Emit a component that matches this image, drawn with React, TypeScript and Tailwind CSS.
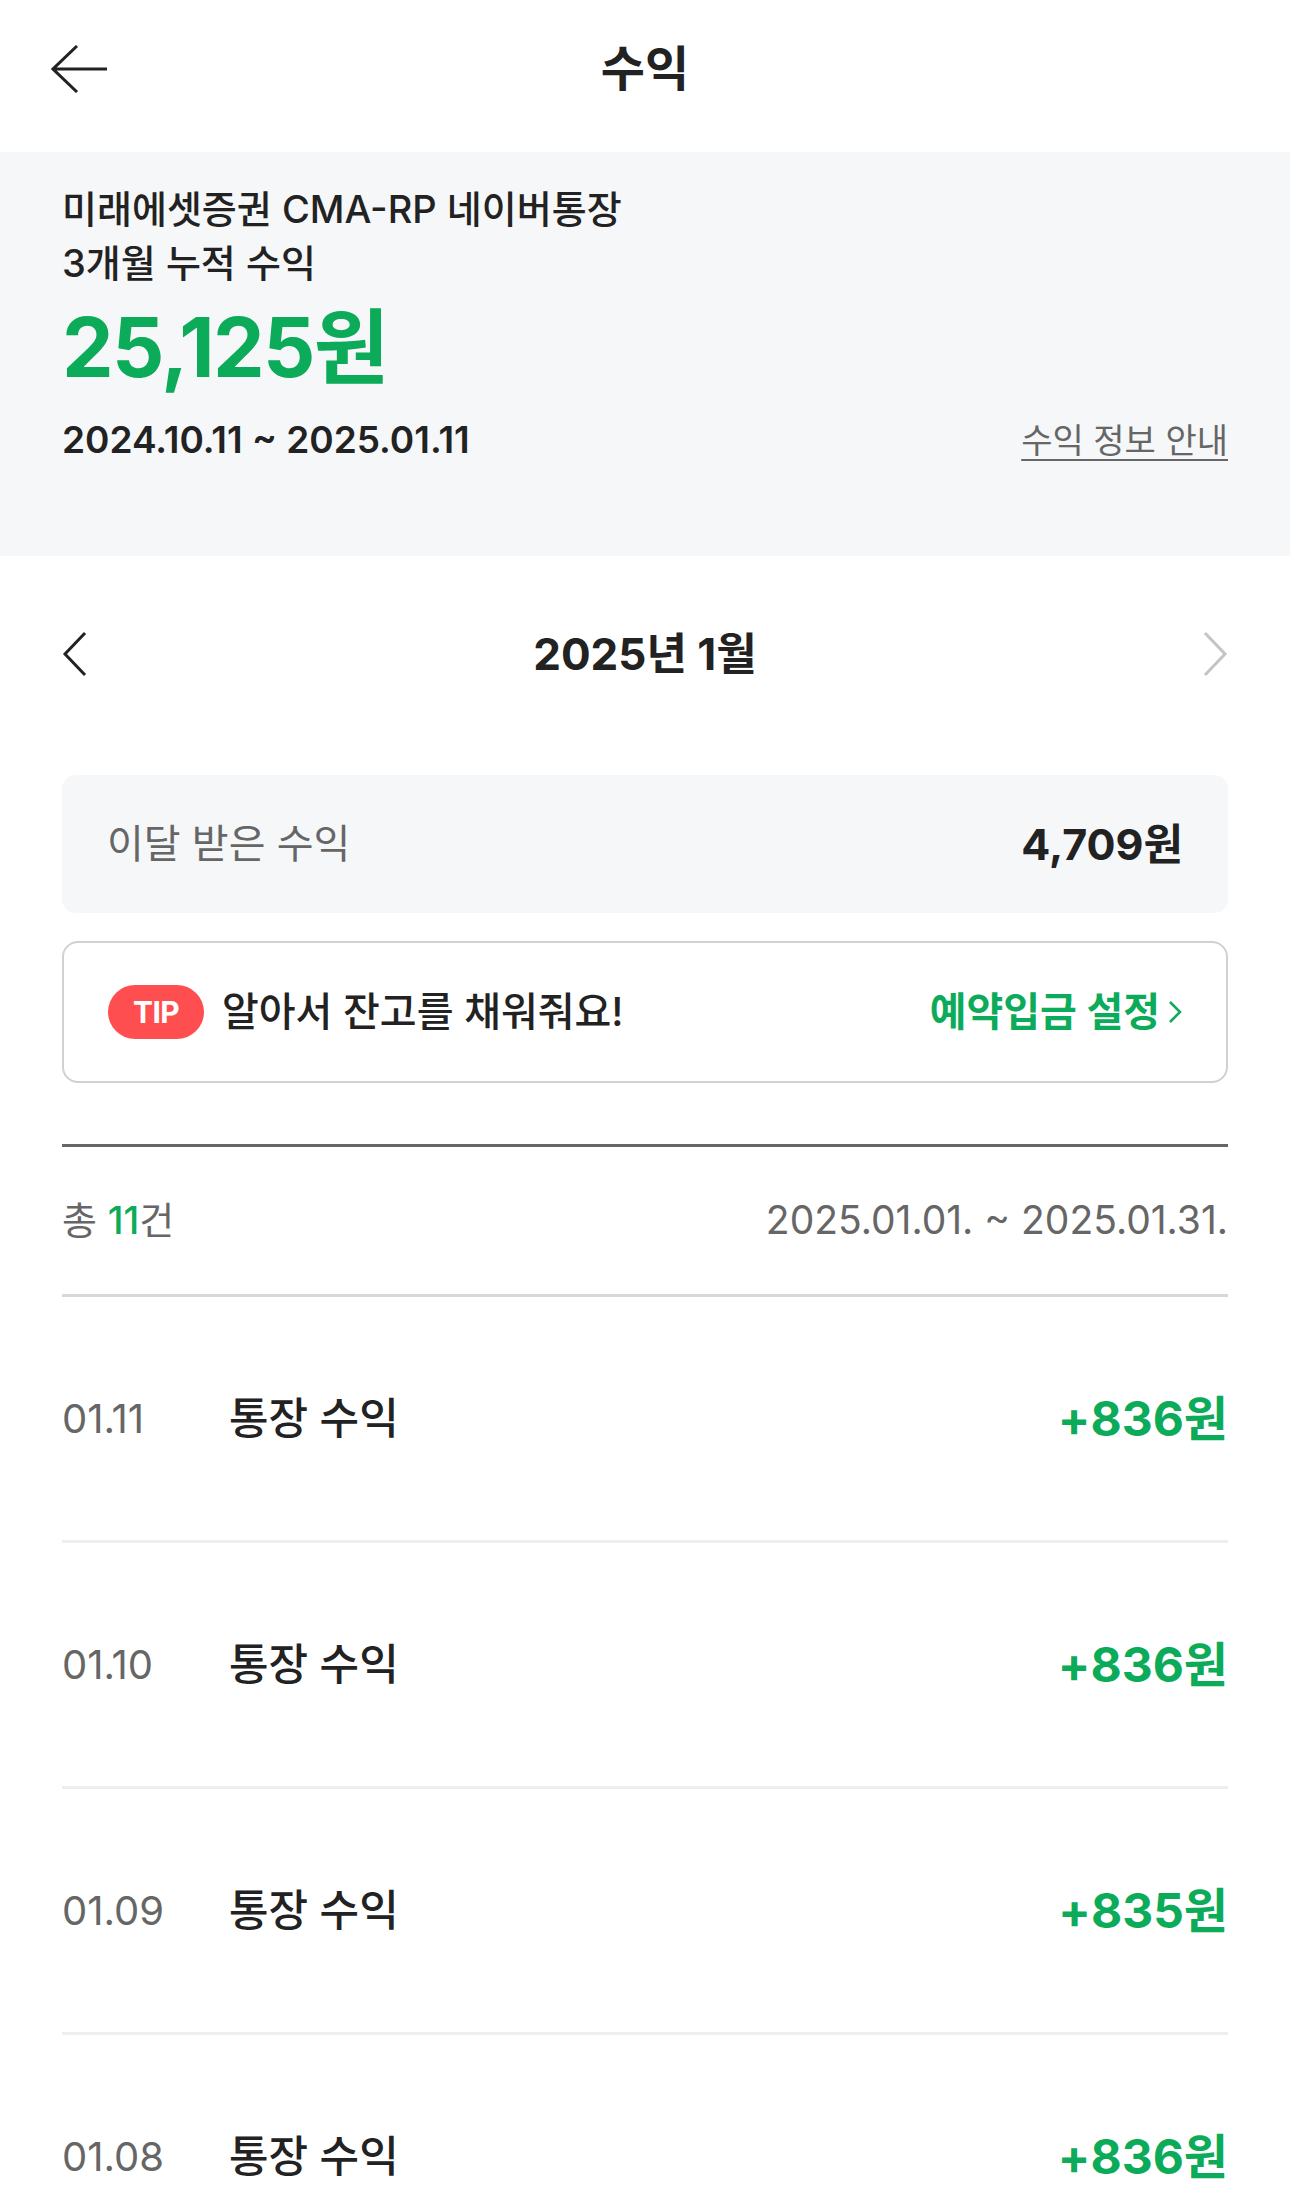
import React from 'react';

const font = { fontFamily: 'Inter, "Noto Sans CJK KR", sans-serif' };

interface Row {
  date: string;
  amount: string;
}

const rows: Row[] = [
  { date: '01.11', amount: '+836원' },
  { date: '01.10', amount: '+836원' },
  { date: '01.09', amount: '+835원' },
  { date: '01.08', amount: '+836원' },
];

const App: React.FC = () => {
  return (
    <div className="w-[1290px] min-h-[2203px] bg-white overflow-hidden" style={font}>
      {/* header */}
      <header className="relative h-[152px] flex items-center justify-center pb-[14px]">
        <button className="absolute left-[51px] top-[45px] w-[56px] h-[48px]">
          <svg width="56" height="48" viewBox="0 0 56 48" fill="none" stroke="#222" strokeWidth="3">
            <path d="M26 1 L2 24 L26 47 M2 24 H56" />
          </svg>
        </button>
        <h1 className="text-[48px] font-bold text-[#222]">수익</h1>
      </header>

      {/* summary */}
      <section className="bg-[#f6f7f9] px-[62px] pt-[30px] pb-[92px]">
        <p className="text-[38px] leading-[54px] text-[#222] font-medium">
          미래에셋증권 CMA-RP 네이버통장
          <br />
          3개월 누적 수익
        </p>
        <p className="mt-[10px] text-[82px] leading-[96px] font-bold text-[#0cab5a] tracking-[-0.02em]">25,125원</p>
        <div className="mt-[20px] flex items-center justify-between h-[48px]">
          <span className="text-[37px] font-semibold text-[#222]">2024.10.11 ~ 2025.01.11</span>
          <span className="text-[34px] text-[#666] underline underline-offset-[6px] decoration-2">수익 정보 안내</span>
        </div>
      </section>

      <div className="px-[62px]">
        {/* month nav */}
        <div className="mt-[54px] h-[88px] flex items-center justify-between">
          <svg width="26" height="46" viewBox="0 0 26 46" fill="none" stroke="#222" strokeWidth="3">
            <path d="M23 2 L3 23 L23 44" />
          </svg>
          <span className="text-[44px] font-bold text-[#222]">2025년 1월</span>
          <svg width="26" height="46" viewBox="0 0 26 46" fill="none" stroke="#c4c4c4" strokeWidth="3">
            <path d="M3 2 L23 23 L3 44" />
          </svg>
        </div>

        {/* month total */}
        <div className="mt-[77px] h-[138px] rounded-[14px] bg-[#f6f7f9] px-[45px] flex items-center justify-between">
          <span className="text-[40px] text-[#666]">이달 받은 수익</span>
          <span className="text-[43px] font-bold text-[#222]">4,709원</span>
        </div>

        {/* tip */}
        <div className="mt-[28px] h-[142px] rounded-[16px] border-2 border-[#cfd1d4] px-[44px] flex items-center justify-between">
          <div className="flex items-center gap-[18px]">
            <span className="w-[96px] h-[54px] rounded-full bg-[#ff4e50] text-white text-[30px] font-bold flex items-center justify-center tracking-[-0.02em]">
              TIP
            </span>
            <span className="text-[40px] font-medium text-[#222]">알아서 잔고를 채워줘요!</span>
          </div>
          <span className="flex items-center gap-[8px] text-[40px] font-bold text-[#0cab5a]">
            예약입금 설정
            <svg width="14" height="26" viewBox="0 0 14 26" fill="none" stroke="#0cab5a" strokeWidth="2.5">
              <path d="M2 3 L12 13 L2 23" />
            </svg>
          </span>
        </div>

        {/* list */}
        <div className="mt-[61px] border-t-[3px] border-[#666]">
          <div className="h-[150px] flex items-center justify-between border-b-[3px] border-[#d8d8d8]">
            <span className="text-[38px] text-[#666]">
              총 <span className="text-[#0cab5a] font-medium">11</span>건
            </span>
            <span className="text-[39px] text-[#666]">2025.01.01. ~ 2025.01.31.</span>
          </div>
          {rows.map((row, index) => (
            <div key={index} className="h-[246px] flex items-center border-b-[3px] border-[#eeeeee]">
              <span className="w-[167px] text-[40px] text-[#666]">{row.date}</span>
              <span className="flex-1 text-[43px] font-medium text-[#222]">통장 수익</span>
              <span className="text-[48px] font-bold text-[#0cab5a]">{row.amount}</span>
            </div>
          ))}
        </div>
      </div>
    </div>
  );
};

export default App;
